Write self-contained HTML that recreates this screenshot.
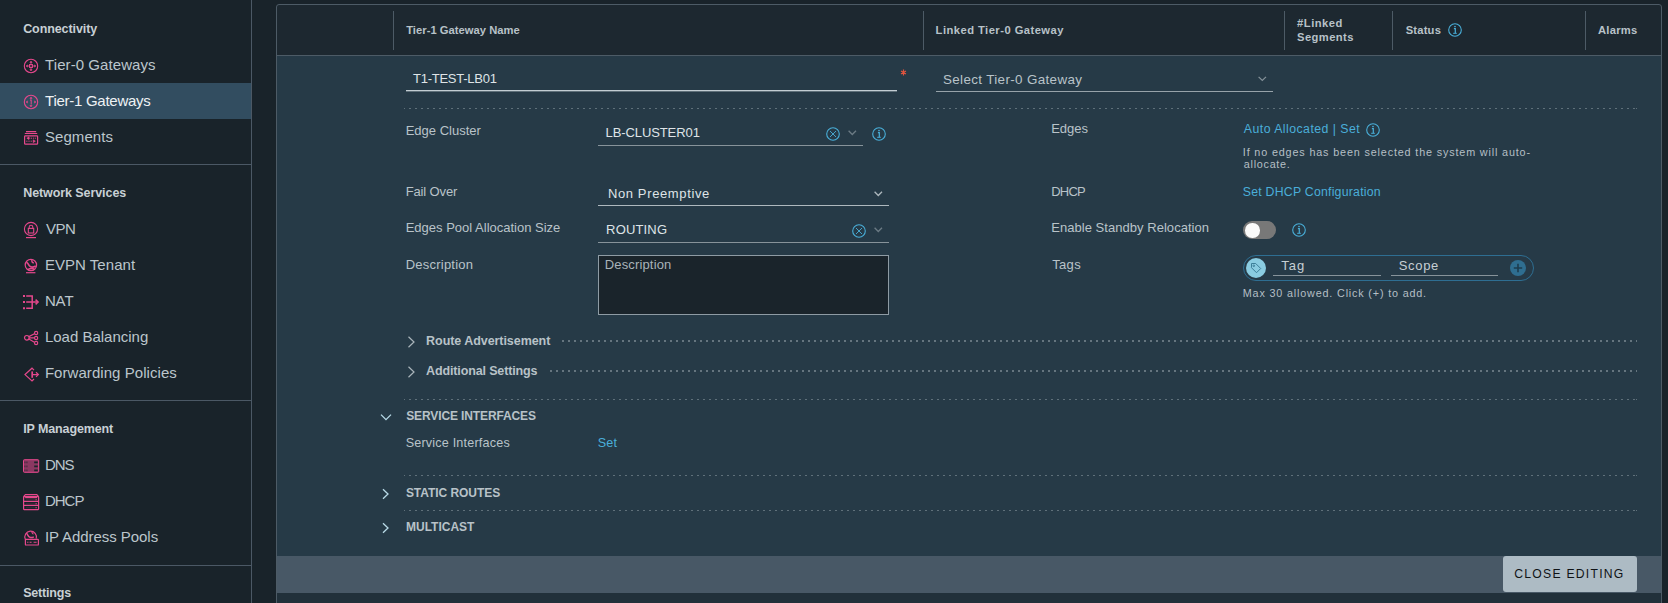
<!DOCTYPE html>
<html><head><meta charset="utf-8"><style>
html,body{margin:0;padding:0;width:1668px;height:603px;overflow:hidden;background:#19232a;}
body{position:relative;font-family:"Liberation Sans", sans-serif;}
.t{position:absolute;white-space:nowrap;}
.a{position:absolute;}
svg{position:absolute;overflow:visible;}
</style></head><body>
<!-- sidebar -->
<div class="a" style="left:0;top:83px;width:251px;height:36px;background:#324d60"></div>
<div class="a" style="left:0;top:164px;width:251px;height:1px;background:#4b5865"></div>
<div class="a" style="left:0;top:400px;width:251px;height:1px;background:#4b5865"></div>
<div class="a" style="left:0;top:565px;width:251px;height:1px;background:#4b5865"></div>
<div class="a" style="left:251px;top:0;width:1px;height:603px;background:#4b5865"></div>
<!-- sidebar icons -->
<svg style="left:23px;top:58px" width="16" height="16" viewBox="0 0 16 16" fill="none" stroke="#e5488c" stroke-width="1.1">
 <circle cx="8" cy="8" r="6.7"/><rect x="6.6" y="6.6" width="2.8" height="2.8"/>
 <path d="M8 6.6V4.2M8 9.4v2.4M6.6 8H4.2M9.4 8h2.4" stroke-width="0.8"/>
 <path d="M6.9 4.4L8 3.1 9.1 4.4zM6.9 11.6L8 12.9 9.1 11.6zM4.4 6.9L3.1 8 4.4 9.1zM11.6 6.9L12.9 8 11.6 9.1z" fill="#e5488c" stroke-width="0.6"/>
</svg>
<svg style="left:23px;top:94px" width="16" height="16" viewBox="0 0 16 16" fill="none" stroke="#e5488c" stroke-width="1.1">
 <circle cx="8" cy="8" r="6.7"/>
 <path d="M7 6.4L8.2 5.6V10.6" stroke-width="1"/>
 <path d="M6.9 4.4L8 3.1 9.1 4.4zM6.9 11.6L8 12.9 9.1 11.6zM4.4 6.9L3.1 8 4.4 9.1zM11.6 6.9L12.9 8 11.6 9.1z" fill="#e5488c" stroke-width="0.6"/>
</svg>
<svg style="left:23px;top:130px" width="16" height="16" viewBox="0 0 16 16" fill="none" stroke="#e5488c" stroke-width="1.2">
 <path d="M3 1.7h10.2M1.8 3.5h12.4"/>
 <rect x="1.6" y="5.8" width="13" height="8.4" rx="0.8"/>
 <path d="M5.5 8.2h7.5M3.2 11.2h6.5" stroke-width="0.9" stroke-dasharray="1.3 0.9"/>
 <path d="M6 6.8L3.8 8.2 6 9.6zM10.2 9.8L12.4 11.2 10.2 12.6z" fill="#e5488c" stroke-width="0.6"/>
</svg>
<svg style="left:23px;top:222px" width="16" height="16" viewBox="0 0 16 16" fill="none" stroke="#e5488c" stroke-width="1.1">
 <circle cx="8" cy="7" r="6.6"/>
 <path d="M6.2 6.3V5a1.8 1.8 0 0 1 3.6 0V6.3"/>
 <rect x="5.3" y="6.4" width="5.4" height="4.6"/>
 <path d="M3 15.6h10" stroke-width="1.2"/>
</svg>
<svg style="left:23px;top:258px" width="16" height="16" viewBox="0 0 16 16" fill="none" stroke="#e5488c" stroke-width="1.2">
 <circle cx="7.9" cy="7" r="5.7"/>
 <path d="M3.4 4.2c1.6.6 2 2.2 3 3.6 1.4 1.8 3.8 1.6 6.4.2" stroke-width="1.6"/>
 <path d="M8.8 2c-.2 1.4.4 2.6 2 3" stroke-width="1.3"/>
 <path d="M4.6 11.6c2-1.2 4.2-1.4 6.6-.8" stroke-width="1.3"/>
 <path d="M3 14.7h9.4" stroke-width="1.2"/>
</svg>
<svg style="left:23px;top:294px" width="16" height="16" viewBox="0 0 16 16" fill="none" stroke="#e5488c">
 <path d="M0 2h2M0 8h2M0 14.2h2" stroke-width="2"/>
 <path d="M3.2 2H9.2V14.2H3.2M3.2 8H14.6" stroke-width="1.5"/>
 <path d="M12.6 5.6L15.1 8 12.6 10.4" stroke-width="1.5"/>
</svg>
<svg style="left:23px;top:330px" width="16" height="16" viewBox="0 0 16 16" fill="none" stroke="#e5488c" stroke-width="1.2">
 <circle cx="3.8" cy="7.8" r="2.3"/>
 <circle cx="13.1" cy="3" r="1.6"/><circle cx="13.1" cy="8" r="1.6"/><circle cx="13.1" cy="13" r="1.6"/>
 <path d="M5.9 6.6L11.4 3.8M6.1 7.9H11.4M5.9 9.1L11.4 12.2"/>
</svg>
<svg style="left:23px;top:366px" width="16" height="16" viewBox="0 0 16 16" fill="none" stroke="#e5488c" stroke-width="1.2">
 <path d="M11 4.2L9 2.2 2 8.6 9 15 11 13"/>
 <path d="M9.2 5.4V11.8" stroke-width="1.7"/>
 <path d="M9.2 8.6h6.1M13 6.3l2.4 2.3-2.4 2.3"/>
</svg>
<svg style="left:23px;top:458px" width="16" height="16" viewBox="0 0 16 16">
 <rect x="0.5" y="1.7" width="15.2" height="12.6" rx="0.8" fill="#8b3862" stroke="#e5488c" stroke-width="1"/>
 <path d="M1.6 4.3h0.7M3.6 4.3h0.7M1.6 8.3h0.7M3.6 8.3h0.7M1.6 12.3h0.7M3.6 12.3h0.7" stroke="#1b232a" stroke-width="1.8"/>
 <path d="M11.2 4.3h3.6M11.2 8.3h3.6M11.2 12.3h3.6" stroke="#1b232a" stroke-width="1.8"/>
</svg>
<svg style="left:23px;top:494px" width="16" height="16" viewBox="0 0 16 16" fill="none" stroke="#e5488c" stroke-width="1.2">
 <path d="M0.6 2.6L2.4 0.6h11.4l1.8 2"/>
 <rect x="0.6" y="2.6" width="15" height="13" rx="0.5"/>
 <path d="M2.2 3.6h11.8" stroke-width="1.2"/>
 <path d="M0.6 7.4h15M0.6 11.4h15"/>
 <path d="M3 5.6h9M3 9.6h9M3 13.6h9" stroke-width="0.5" stroke="#5a2a44"/>
 <path d="M12.6 5.6h1M12.6 9.6h1M12.6 13.6h1" stroke-width="1.3"/>
</svg>
<svg style="left:23px;top:530px" width="16" height="16" viewBox="0 0 16 16" fill="none" stroke="#e5488c" stroke-width="1.2">
 <path d="M2.4 9.4A5.8 5.8 0 1 1 13.2 8.6"/>
 <path d="M3.2 3.2c1.6 1 1.6 3 3.4 4 1.3.7 2.8.4 4.2-.4" stroke-width="1.5"/>
 <path d="M9 1.4c-.3 1.2.2 2.2 1.4 2.8" stroke-width="1.2"/>
 <rect x="2.4" y="9.4" width="13" height="5.6" rx="0.6"/>
 <path d="M4.2 12.2h1.2M6.6 12.2h2M10.6 12.2h3" stroke-width="1.1"/>
</svg>

<!-- card -->
<div class="a" style="left:276px;top:4px;width:1384px;height:640px;border:1px solid #4d5b66;border-radius:3px;background:#1d2830"></div>
<div class="a" style="left:277px;top:55px;width:1384px;height:1px;background:#4d5b66"></div>
<div class="a" style="left:277px;top:56px;width:1384px;height:500px;background:#263a47"></div>
<div class="a" style="left:277px;top:556px;width:1384px;height:37px;background:#485866"></div>
<div class="a" style="left:277px;top:593px;width:1384px;height:10px;background:#21303a"></div>
<div class="a" style="left:393px;top:11px;width:1px;height:39px;background:#4d5b66"></div>
<div class="a" style="left:923px;top:11px;width:1px;height:39px;background:#4d5b66"></div>
<div class="a" style="left:1284px;top:11px;width:1px;height:39px;background:#4d5b66"></div>
<div class="a" style="left:1392px;top:11px;width:1px;height:39px;background:#4d5b66"></div>
<div class="a" style="left:1585px;top:11px;width:1px;height:39px;background:#4d5b66"></div>
<!-- status info -->
<svg style="left:1448px;top:23px" width="14" height="14" viewBox="0 0 14 14" fill="none" stroke="#49afd9" stroke-width="1.1">
 <circle cx="7" cy="7" r="6.3"/><path d="M5.9 5.6h1.4v4.5" stroke-width="1.2"/><path d="M5.2 10.3h3.6" stroke-width="1"/><circle cx="7" cy="3.5" r="0.85" fill="#49afd9" stroke="none"/>
</svg>

<!-- row: name -->
<div class="a" style="left:406px;top:90px;width:491px;height:1px;background:#c3cdd3"></div><div class="a" style="left:406px;top:91px;width:491px;height:1px;background:#5f707a"></div>
<svg style="left:900px;top:69px" width="7" height="7" viewBox="0 0 7 7" fill="none" stroke="#e2553f" stroke-width="1.2">
 <path d="M3.5 0.6v5.8M1 2l5 3M1 5l5-3"/><circle cx="3.5" cy="3.5" r="1.1" fill="#e2553f" stroke="none"/>
</svg>
<div class="a" style="left:936px;top:91px;width:337px;height:1px;background:#97a3aa"></div>
<svg style="left:1258px;top:76px" width="9" height="6" viewBox="0 0 9 6" fill="none" stroke="#85929a" stroke-width="1.2"><path d="M0.6 0.8L4.3 4.5 8 0.8"/></svg>
<div class="a" style="left:404px;top:108px;width:1233px;height:1px;background:repeating-linear-gradient(to right,#5f707a 0 2px,transparent 2px 6px);background-position:-1px 0"></div>

<!-- edge cluster -->
<div class="a" style="left:598px;top:145px;width:265px;height:1px;background:#87939a"></div>
<svg style="left:826px;top:127px" width="14" height="14" viewBox="0 0 14 14" fill="none" stroke="#49afd9" stroke-width="1.1">
 <circle cx="7" cy="7" r="6.3"/><path d="M4 4l6 6M10 4l-6 6" stroke-width="0.9"/>
</svg>
<svg style="left:848px;top:130px" width="9" height="6" viewBox="0 0 9 6" fill="none" stroke="#6c7b85" stroke-width="1.3"><path d="M0.6 0.8L4.3 4.5 8 0.8"/></svg>
<svg style="left:872px;top:127px" width="14" height="14" viewBox="0 0 14 14" fill="none" stroke="#49afd9" stroke-width="1.1">
 <circle cx="7" cy="7" r="6.3"/><path d="M5.9 5.6h1.4v4.5" stroke-width="1.2"/><path d="M5.2 10.3h3.6" stroke-width="1"/><circle cx="7" cy="3.5" r="0.85" fill="#49afd9" stroke="none"/>
</svg>
<svg style="left:1366px;top:123px" width="14" height="14" viewBox="0 0 14 14" fill="none" stroke="#49afd9" stroke-width="1.1">
 <circle cx="7" cy="7" r="6.3"/><path d="M5.9 5.6h1.4v4.5" stroke-width="1.2"/><path d="M5.2 10.3h3.6" stroke-width="1"/><circle cx="7" cy="3.5" r="0.85" fill="#49afd9" stroke="none"/>
</svg>

<!-- fail over -->
<div class="a" style="left:598px;top:205px;width:291px;height:1px;background:#aeb8be"></div>
<svg style="left:874px;top:191px" width="9" height="6" viewBox="0 0 9 6" fill="none" stroke="#aeb8be" stroke-width="1.3"><path d="M0.6 0.8L4.3 4.5 8 0.8"/></svg>
<!-- routing -->
<svg style="left:852px;top:224px" width="14" height="14" viewBox="0 0 14 14" fill="none" stroke="#49afd9" stroke-width="1.1">
 <circle cx="7" cy="7" r="6.3"/><path d="M4 4l6 6M10 4l-6 6" stroke-width="0.9"/>
</svg>
<svg style="left:874px;top:227px" width="9" height="6" viewBox="0 0 9 6" fill="none" stroke="#6c7b85" stroke-width="1.3"><path d="M0.6 0.8L4.3 4.5 8 0.8"/></svg>
<div class="a" style="left:598px;top:242px;width:291px;height:1px;background:#87939a"></div>
<!-- toggle -->
<div class="a" style="left:1243px;top:221px;width:33px;height:18px;border-radius:9px;background:#787878"></div>
<div class="a" style="left:1245px;top:223px;width:14.5px;height:14.5px;border-radius:50%;background:#fafafa"></div>
<svg style="left:1292px;top:223px" width="14" height="14" viewBox="0 0 14 14" fill="none" stroke="#49afd9" stroke-width="1.1">
 <circle cx="7" cy="7" r="6.3"/><path d="M5.9 5.6h1.4v4.5" stroke-width="1.2"/><path d="M5.2 10.3h3.6" stroke-width="1"/><circle cx="7" cy="3.5" r="0.85" fill="#49afd9" stroke="none"/>
</svg>
<!-- textarea -->
<div class="a" style="left:598px;top:255px;width:289px;height:58px;border:1px solid #8e9ba4;background:#1a242b"></div>
<!-- tags -->
<div class="a" style="left:1243px;top:255px;width:289px;height:24px;border:1px solid #2e6e92;border-radius:13px"></div>
<div class="a" style="left:1246px;top:258px;width:20px;height:20px;border-radius:10px;background:#8accE1"></div>
<svg style="left:1249px;top:261px" width="14" height="14" viewBox="0 0 14 14" fill="none" stroke="#3d7f99" stroke-width="1"><path d="M2.5 2.5h4.2l5 5-4.2 4.2-5-5z"/><circle cx="4.8" cy="4.8" r="0.8"/></svg>
<div class="a" style="left:1273px;top:275px;width:108px;height:1px;background:#87939a"></div>
<div class="a" style="left:1391px;top:275px;width:107px;height:1px;background:#87939a"></div>
<div class="a" style="left:1510px;top:260px;width:16px;height:16px;border-radius:8px;background:#2f6e90"></div>
<svg style="left:1510px;top:260px" width="16" height="16" viewBox="0 0 16 16" fill="none" stroke="#1d3c4e" stroke-width="1.6"><path d="M8 3.8v8.4M3.8 8h8.4"/></svg>

<!-- collapsible sections -->
<svg style="left:407px;top:336px" width="9" height="12" viewBox="0 0 9 12" fill="none" stroke="#aab5bb" stroke-width="1.2"><path d="M1.5 0.8L7 6 1.5 11.2"/></svg>
<div class="a" style="left:562px;top:340px;width:1075px;height:2px;background:repeating-linear-gradient(to right,#65757f 0 2px,transparent 2px 6px)"></div>
<svg style="left:407px;top:366px" width="9" height="12" viewBox="0 0 9 12" fill="none" stroke="#aab5bb" stroke-width="1.2"><path d="M1.5 0.8L7 6 1.5 11.2"/></svg>
<div class="a" style="left:550px;top:370px;width:1087px;height:2px;background:repeating-linear-gradient(to right,#65757f 0 2px,transparent 2px 6px)"></div>
<div class="a" style="left:404px;top:399px;width:1233px;height:1px;background:repeating-linear-gradient(to right,#5f707a 0 2px,transparent 2px 6px);background-position:-1px 0"></div>
<svg style="left:380px;top:413px" width="12" height="9" viewBox="0 0 12 9" fill="none" stroke="#b9dbe8" stroke-width="1.3"><path d="M1 1.6L6 6.6 11 1.6"/></svg>
<div class="a" style="left:404px;top:475px;width:1233px;height:1px;background:repeating-linear-gradient(to right,#5f707a 0 2px,transparent 2px 6px);background-position:-1px 0"></div>
<svg style="left:381px;top:488px" width="9" height="12" viewBox="0 0 9 12" fill="none" stroke="#b9dbe8" stroke-width="1.3"><path d="M2 1.2L7 6 2 10.8"/></svg>
<div class="a" style="left:404px;top:510px;width:1233px;height:1px;background:repeating-linear-gradient(to right,#5f707a 0 2px,transparent 2px 6px);background-position:-1px 0"></div>
<svg style="left:381px;top:522px" width="9" height="12" viewBox="0 0 9 12" fill="none" stroke="#b9dbe8" stroke-width="1.3"><path d="M2 1.2L7 6 2 10.8"/></svg>

<!-- button -->
<div class="a" style="left:1503px;top:556px;width:134px;height:36px;border-radius:3px;background:#adbbc4"></div>

<div class="t" style="left:23.20px;top:23.42px;font-size:12.5px;line-height:12.5px;color:#c8d0d5;font-weight:700;letter-spacing:-0.091px">Connectivity</div>
<div class="t" style="left:45.10px;top:57.30px;font-size:15px;line-height:15px;color:#bcc6cc;letter-spacing:0.071px">Tier-0 Gateways</div>
<div class="t" style="left:45.10px;top:93.30px;font-size:15px;line-height:15px;color:#eef2f4;letter-spacing:-0.271px">Tier-1 Gateways</div>
<div class="t" style="left:44.90px;top:129.30px;font-size:15px;line-height:15px;color:#bcc6cc;letter-spacing:0.086px">Segments</div>
<div class="t" style="left:23.20px;top:187.42px;font-size:12.5px;line-height:12.5px;color:#c8d0d5;font-weight:700;letter-spacing:-0.080px">Network Services</div>
<div class="t" style="left:45.90px;top:221.30px;font-size:15px;line-height:15px;color:#bcc6cc;letter-spacing:-0.500px">VPN</div>
<div class="t" style="left:44.90px;top:257.30px;font-size:15px;line-height:15px;color:#bcc6cc;letter-spacing:0.040px">EVPN Tenant</div>
<div class="t" style="left:44.90px;top:293.30px;font-size:15px;line-height:15px;color:#bcc6cc;letter-spacing:-0.100px">NAT</div>
<div class="t" style="left:44.90px;top:329.30px;font-size:15px;line-height:15px;color:#bcc6cc">Load Balancing</div>
<div class="t" style="left:44.90px;top:365.30px;font-size:15px;line-height:15px;color:#bcc6cc;letter-spacing:0.056px">Forwarding Policies</div>
<div class="t" style="left:23.20px;top:423.42px;font-size:12.5px;line-height:12.5px;color:#c8d0d5;font-weight:700;letter-spacing:-0.117px">IP Management</div>
<div class="t" style="left:44.90px;top:457.30px;font-size:15px;line-height:15px;color:#bcc6cc;letter-spacing:-1.000px">DNS</div>
<div class="t" style="left:44.90px;top:493.30px;font-size:15px;line-height:15px;color:#bcc6cc;letter-spacing:-1.000px">DHCP</div>
<div class="t" style="left:44.90px;top:529.30px;font-size:15px;line-height:15px;color:#bcc6cc;letter-spacing:-0.047px">IP Address Pools</div>
<div class="t" style="left:23.20px;top:587.42px;font-size:12.5px;line-height:12.5px;color:#c8d0d5;font-weight:700;letter-spacing:-0.200px">Settings</div>
<div class="t" style="left:406.20px;top:24.52px;font-size:11.2px;line-height:11.2px;color:#b8c2c8;font-weight:700;letter-spacing:0.033px">Tier-1 Gateway Name</div>
<div class="t" style="left:935.60px;top:24.52px;font-size:11.2px;line-height:11.2px;color:#b8c2c8;font-weight:700;letter-spacing:0.465px">Linked Tier-0 Gateway</div>
<div class="t" style="left:1297.10px;top:17.52px;font-size:11.2px;line-height:11.2px;color:#b8c2c8;font-weight:700;letter-spacing:0.500px">#Linked</div>
<div class="t" style="left:1297.10px;top:31.52px;font-size:11.2px;line-height:11.2px;color:#b8c2c8;font-weight:700;letter-spacing:0.400px">Segments</div>
<div class="t" style="left:1405.70px;top:24.52px;font-size:11.2px;line-height:11.2px;color:#b8c2c8;font-weight:700;letter-spacing:0.200px">Status</div>
<div class="t" style="left:1598.00px;top:24.52px;font-size:11.2px;line-height:11.2px;color:#b8c2c8;font-weight:700;letter-spacing:0.240px">Alarms</div>
<div class="t" style="left:413.00px;top:72.00px;font-size:13px;line-height:13px;color:#dfe4e7;letter-spacing:-0.255px">T1-TEST-LB01</div>
<div class="t" style="left:943.00px;top:72.66px;font-size:13.4px;line-height:13.4px;color:#b9c3c9;letter-spacing:0.360px">Select Tier-0 Gateway</div>
<div class="t" style="left:405.70px;top:124.00px;font-size:13px;line-height:13px;color:#b9c3c9">Edge Cluster</div>
<div class="t" style="left:605.50px;top:126.00px;font-size:13px;line-height:13px;color:#dfe4e7;letter-spacing:-0.091px">LB-CLUSTER01</div>
<div class="t" style="left:1051.20px;top:122.00px;font-size:13px;line-height:13px;color:#b9c3c9">Edges</div>
<div class="t" style="left:1243.80px;top:122.59px;font-size:12.3px;line-height:12.3px;color:#4aaed9;letter-spacing:0.463px">Auto Allocated | Set</div>
<div class="t" style="left:1242.80px;top:146.86px;font-size:10.8px;line-height:10.8px;color:#b5bfc5;letter-spacing:0.848px">If no edges has been selected the system will auto-</div>
<div class="t" style="left:1243.80px;top:158.86px;font-size:10.8px;line-height:10.8px;color:#b5bfc5;letter-spacing:0.725px">allocate.</div>
<div class="t" style="left:405.70px;top:185.00px;font-size:13px;line-height:13px;color:#b9c3c9;letter-spacing:-0.125px">Fail Over</div>
<div class="t" style="left:607.90px;top:187.00px;font-size:13px;line-height:13px;color:#dfe4e7;letter-spacing:0.631px">Non Preemptive</div>
<div class="t" style="left:1051.20px;top:185.00px;font-size:13px;line-height:13px;color:#b9c3c9;letter-spacing:-0.767px">DHCP</div>
<div class="t" style="left:1242.80px;top:185.59px;font-size:12.3px;line-height:12.3px;color:#4aaed9;letter-spacing:0.229px">Set DHCP Configuration</div>
<div class="t" style="left:405.70px;top:221.00px;font-size:13px;line-height:13px;color:#b9c3c9">Edges Pool Allocation Size</div>
<div class="t" style="left:606.10px;top:223.00px;font-size:13px;line-height:13px;color:#dfe4e7;letter-spacing:0.167px">ROUTING</div>
<div class="t" style="left:1051.20px;top:221.00px;font-size:13px;line-height:13px;color:#b9c3c9;letter-spacing:0.042px">Enable Standby Relocation</div>
<div class="t" style="left:405.70px;top:258.00px;font-size:13px;line-height:13px;color:#b9c3c9;letter-spacing:0.230px">Description</div>
<div class="t" style="left:604.70px;top:258.00px;font-size:13px;line-height:13px;color:#a9b3b9;letter-spacing:0.160px">Description</div>
<div class="t" style="left:1052.20px;top:258.00px;font-size:13px;line-height:13px;color:#b9c3c9;letter-spacing:0.333px">Tags</div>
<div class="t" style="left:1281.30px;top:259.00px;font-size:13px;line-height:13px;color:#c6cfd4;letter-spacing:1.000px">Tag</div>
<div class="t" style="left:1398.70px;top:259.00px;font-size:13px;line-height:13px;color:#c6cfd4;letter-spacing:0.700px">Scope</div>
<div class="t" style="left:1242.80px;top:288.46px;font-size:10.8px;line-height:10.8px;color:#b5bfc5;letter-spacing:0.825px">Max 30 allowed. Click (+) to add.</div>
<div class="t" style="left:426.10px;top:335.02px;font-size:12.5px;line-height:12.5px;color:#b8c2c8;font-weight:700;letter-spacing:-0.056px">Route Advertisement</div>
<div class="t" style="left:426.10px;top:365.02px;font-size:12.5px;line-height:12.5px;color:#b8c2c8;font-weight:700;letter-spacing:-0.139px">Additional Settings</div>
<div class="t" style="left:406.20px;top:410.34px;font-size:12px;line-height:12px;color:#b8c2c8;font-weight:700;letter-spacing:-0.118px">SERVICE INTERFACES</div>
<div class="t" style="left:405.70px;top:436.63px;font-size:12.6px;line-height:12.6px;color:#b9c3c9;letter-spacing:0.188px">Service Interfaces</div>
<div class="t" style="left:597.70px;top:436.63px;font-size:12.6px;line-height:12.6px;color:#4aaed9;letter-spacing:0.250px">Set</div>
<div class="t" style="left:405.90px;top:487.34px;font-size:12px;line-height:12px;color:#b8c2c8;font-weight:700;letter-spacing:-0.050px">STATIC ROUTES</div>
<div class="t" style="left:406.00px;top:521.34px;font-size:12px;line-height:12px;color:#b8c2c8;font-weight:700">MULTICAST</div>
<div class="t" style="left:1514.20px;top:567.67px;font-size:12.2px;line-height:12.2px;color:#101316;letter-spacing:1.250px">CLOSE EDITING</div>
</body></html>
